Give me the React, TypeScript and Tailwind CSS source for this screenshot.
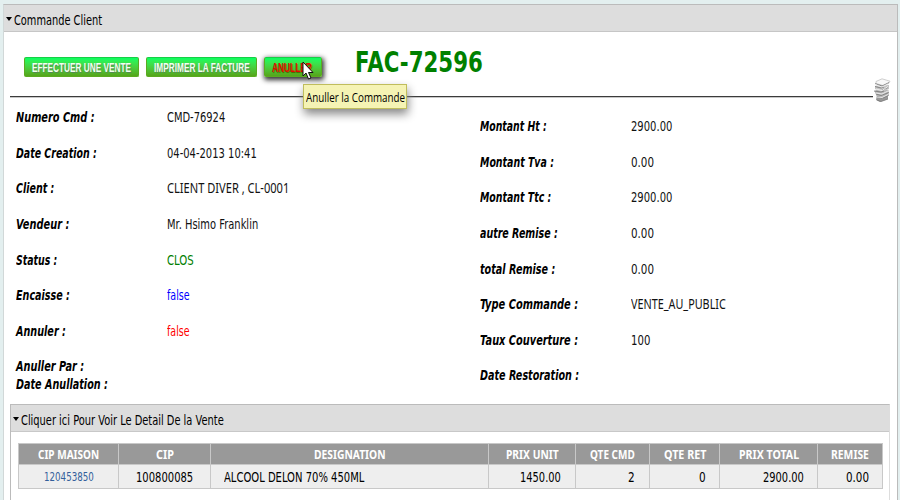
import { useLayoutEffect, useRef } from "react";
import type { ReactNode } from "react";

// Sets a line of text to a fixed width by condensing its glyphs.
function Fit({ w, className = "", children }: { w: number; className?: string; children: ReactNode }) {
  const ref = useRef<HTMLSpanElement>(null);
  useLayoutEffect(() => {
    const el = ref.current;
    if (el && el.offsetWidth) {
      el.style.transform = `scaleX(${w / el.offsetWidth})`;
    }
  }, [w]);
  return (
    <span className={`block shrink-0 ${className}`} style={{ width: w }}>
      <span ref={ref} className="inline-block origin-left whitespace-nowrap align-top">
        {children}
      </span>
    </span>
  );
}

type Row = { label: string; lw: number; value?: string; vw?: number; color?: string; tight?: boolean; serifI?: boolean };

const left: Row[] = [
  { label: "Numero Cmd :", lw: 79, value: "CMD-76924", vw: 58 },
  { label: "Date Creation :", lw: 81, value: "04-04-2013 10:41", vw: 90 },
  { label: "Client :", lw: 38, value: "CLIENT DIVER , CL-0001", vw: 122, serifI: true },
  { label: "Vendeur :", lw: 53, value: "Mr. Hsimo Franklin", vw: 91 },
  { label: "Status :", lw: 41, value: "CLOS", vw: 27, color: "text-[#008000]" },
  { label: "Encaisse :", lw: 54, value: "false", vw: 22.5, color: "text-[#0000ff]" },
  { label: "Annuler :", lw: 50, value: "false", vw: 22.5, color: "text-[#ff0000]" },
  { label: "Anuller Par :", lw: 68, tight: true },
  { label: "Date Anullation :", lw: 92, tight: true },
];

const right: Row[] = [
  { label: "Montant Ht :", lw: 67, value: "2900.00", vw: 41.5 },
  { label: "Montant Tva :", lw: 74, value: "0.00", vw: 23 },
  { label: "Montant Ttc :", lw: 71, value: "2900.00", vw: 41.5 },
  { label: "autre Remise :", lw: 78, value: "0.00", vw: 23 },
  { label: "total Remise :", lw: 75, value: "0.00", vw: 23 },
  { label: "Type Commande :", lw: 98, value: "VENTE_AU_PUBLIC", vw: 95, serifI: true },
  { label: "Taux Couverture :", lw: 98, value: "100", vw: 19.5 },
  { label: "Date Restoration :", lw: 99 },
];

function Fields({ rows }: { rows: Row[] }) {
  return (
    <>
      {rows.map((r) => (
        <div key={r.label} className={`flex items-start leading-[18px] ${r.tight ? "h-[17.8px]" : "h-[35.65px]"}`}>
          <div className="w-[151px] shrink-0 font-['DejaVu_Sans',sans-serif] text-[13.5px] font-bold italic">
            <Fit w={r.lw}>{r.label}</Fit>
          </div>
          {r.value && (
            <Fit
              w={r.vw ?? 0}
              className={`${
                r.serifI ? "font-['Noto_Sans',sans-serif] text-[14px]" : "font-['DejaVu_Sans',sans-serif] text-[13.5px]"
              } ${r.color ?? "text-[#111]"}`}
            >
              {r.value}
            </Fit>
          )}
        </div>
      ))}
    </>
  );
}

function Papers() {
  return (
    <svg className="block" width="18" height="25" viewBox="0 0 18 25">
      <path d="M4 17l3-2 8 1v5l-8 3-4-2z" fill="#999" />
      <path d="M1.500 13l4-2 10 1v5l-9 3-3-2z" fill="#b5b5b5" />
      <path d="M2 8l5-2 9 1v4l-8 3-6-3z" fill="#c4c4c4" />
      <path d="M3 3.500L9 .8l8 2.400-1 1.800-6 2.500-7-2z" fill="#f8f8f8" stroke="#bbb" strokeWidth=".7" />
      <path d="M2 5.500l7 2.500 7-3.500M2 8.500l6 1.500 3-1M9 12l6-2.500M1 13l7 1 3-1M3 16l5 1.500 8-3M4 18.500l5 1.500M10 20l6-3M4 22l4 1.500 7-2.500" fill="none" stroke="#777" strokeWidth=".8" />
      <path d="M3 7l6 2 6-3M3 11l6 1.500 6-4M3 15l6 1 6-3M4 19l5 .500 6-3" fill="none" stroke="#f0f0f0" strokeWidth=".9" />
    </svg>
  );
}

function GreenButton({ w, tw, label, active }: { w: number; tw: number; label: string; active?: boolean }) {
  return (
    <button
      style={{ width: w }}
      className={`flex h-5 shrink-0 justify-center rounded-[2px] border border-[#5aab20] border-t-[#18cf45] bg-linear-to-b from-[#00ff60] to-[#55a519] font-['Liberation_Sans',sans-serif] text-[12.5px] font-bold leading-[20px] ${
        active
          ? "pr-[3px] text-[#e50a00] shadow-[1px_2px_5px_1px_#333] [text-shadow:1px_1px_1px_#476b00]"
          : "text-[#f2fff2] [text-shadow:1px_1px_1px_#568656]"
      }`}
    >
      <Fit w={tw}>{label}</Fit>
    </button>
  );
}

function Arrow() {
  return (
    <svg className="mt-px block shrink-0" width="6" height="4" viewBox="0 0 6 4">
      <path d="M0 0h6L3 4z" fill="#000" />
    </svg>
  );
}

const columns = [
  { head: "CIP MAISON", hw: 61, width: "w-[100px]" },
  { head: "CIP", hw: 18, width: "w-[92px]" },
  { head: "DESIGNATION", hw: 72, width: "w-[278px]" },
  { head: "PRIX UNIT", hw: 53, width: "w-[87px]" },
  { head: "QTE CMD", hw: 45, width: "w-[74px]" },
  { head: "QTE RET", hw: 42, width: "w-[70px]" },
  { head: "PRIX TOTAL", hw: 60, width: "w-[98px]" },
  { head: "REMISE", hw: 38, width: "w-[64px]" },
];

const cells = [
  { text: "120453850", w: 50, place: "justify-center text-[12px] text-[#335f9b]" },
  { text: "100800085", w: 57, place: "justify-center pr-px text-[13.5px]" },
  { text: "ALCOOL DELON 70% 450ML", w: 140, place: "pl-[13px] text-[13.5px]" },
  { text: "1450.00", w: 41, place: "justify-end pr-[14px] text-[13.5px]" },
  { text: "2", w: 7, place: "justify-end pr-[14px] text-[13.5px]" },
  { text: "0", w: 7, place: "justify-end pr-[13px] text-[13.5px]" },
  { text: "2900.00", w: 41, place: "justify-end pr-[13px] text-[13.5px]" },
  { text: "0.00", w: 23, place: "justify-end pr-[13px] text-[13.5px]" },
];

export default function App() {
  return (
    <div className="h-[500px] w-[900px] overflow-hidden bg-[#e3efef] pl-[3px] pt-1 text-black">
      <div className="h-[496px] w-[895px] border border-b-0 border-[#bbb] border-l-[#d1d8d8] bg-white">
        <header className="flex h-[27px] items-center border-b border-[#c6c6c6] bg-[#ddd] pl-[2px]">
          <Arrow />
          <Fit w={88} className="ml-[2px] mt-[3px] font-['DejaVu_Sans',sans-serif] text-[13.5px] leading-[18px]">
            Commande Client
          </Fit>
        </header>

        <div className="flex h-[64px] items-start pl-[20px] pt-[25px]">
          <div className="flex gap-[7px]">
            <GreenButton w={115} tw={99} label="EFFECTUER UNE VENTE" />
            <GreenButton w={111} tw={96} label="IMPRIMER LA FACTURE" />
            <div className="relative">
              <GreenButton w={58} tw={40} label="ANULLER" active />
              <div className="absolute left-[39px] top-[27px] z-10 h-[25px] w-[104px] border border-[#c0bd5c] bg-[#f5f3b4] pl-[2px] font-['Open_Sans',sans-serif] text-[13.5px] leading-[24px] shadow-[1px_5px_10px_#888]">
                <Fit w={99}>Anuller la Commande</Fit>
              </div>
              <svg className="absolute left-[38px] top-[4px] z-20" width="12" height="19" viewBox="0 0 12 19">
                <path d="M1 1v14l3-3 2.500 6 2.500-1-2.500-5.500H11z" fill="#fff" stroke="#111" strokeWidth="1" />
              </svg>
            </div>
          </div>
          <Fit w={128} className="-mt-[12px] ml-[33px] font-['DejaVu_Sans',sans-serif] text-[29px] font-bold leading-[34px] text-[#008000]">
            FAC-72596
          </Fit>
        </div>
        <div className="flex h-[12px] pl-[6px]">
          <div className="h-[2px] w-[863px] border-b border-[#c8c8c8] bg-[#3b3b3b]" />
          <div className="-mt-[18px]">
            <Papers />
          </div>
        </div>

        <div className="flex h-[296px]">
          <div className="w-[476px] shrink-0 pl-[12px]">
            <Fields rows={left} />
          </div>
          <div className="pt-[9px]">
            <Fields rows={right} />
          </div>
        </div>

        <section className="ml-[6px] h-[100px] w-[880px] border border-b-0 border-[#bbb] border-r-[#ddd]">
          <header className="flex h-[27px] items-center border-b border-[#c8c8c8] bg-[#ddd] pl-[2px]">
            <Arrow />
            <Fit w={203} className="ml-[2px] mt-[4px] font-['DejaVu_Sans',sans-serif] text-[13.5px] leading-[18px]">
              Cliquer ici Pour Voir Le Detail De la Vente
            </Fit>
          </header>
          <div className="ml-[7px] mt-[11px] w-[865px] border border-[#c8c8c8]">
            <div className="flex h-[21px] border-b border-[#c8c8c8] bg-[#999]">
              {columns.map((c) => (
                <div
                  key={c.head}
                  className={`${c.width} flex shrink-0 justify-center border-r border-[#c8c8c8] pt-px font-['Noto_Sans',sans-serif] text-[12px] font-bold leading-[20px] text-white last:border-r-0`}
                >
                  <Fit w={c.hw}>{c.head}</Fit>
                </div>
              ))}
            </div>
            <div className="flex h-[23px] bg-[#eee] font-['DejaVu_Sans',sans-serif] leading-[24px]">
              {cells.map((c, i) => (
                <div
                  key={i}
                  className={`${columns[i].width} flex shrink-0 border-r border-[#c8c8c8] last:border-r-0 ${c.place}`}
                >
                  <Fit w={c.w}>{c.text}</Fit>
                </div>
              ))}
            </div>
          </div>
        </section>
      </div>
    </div>
  );
}
